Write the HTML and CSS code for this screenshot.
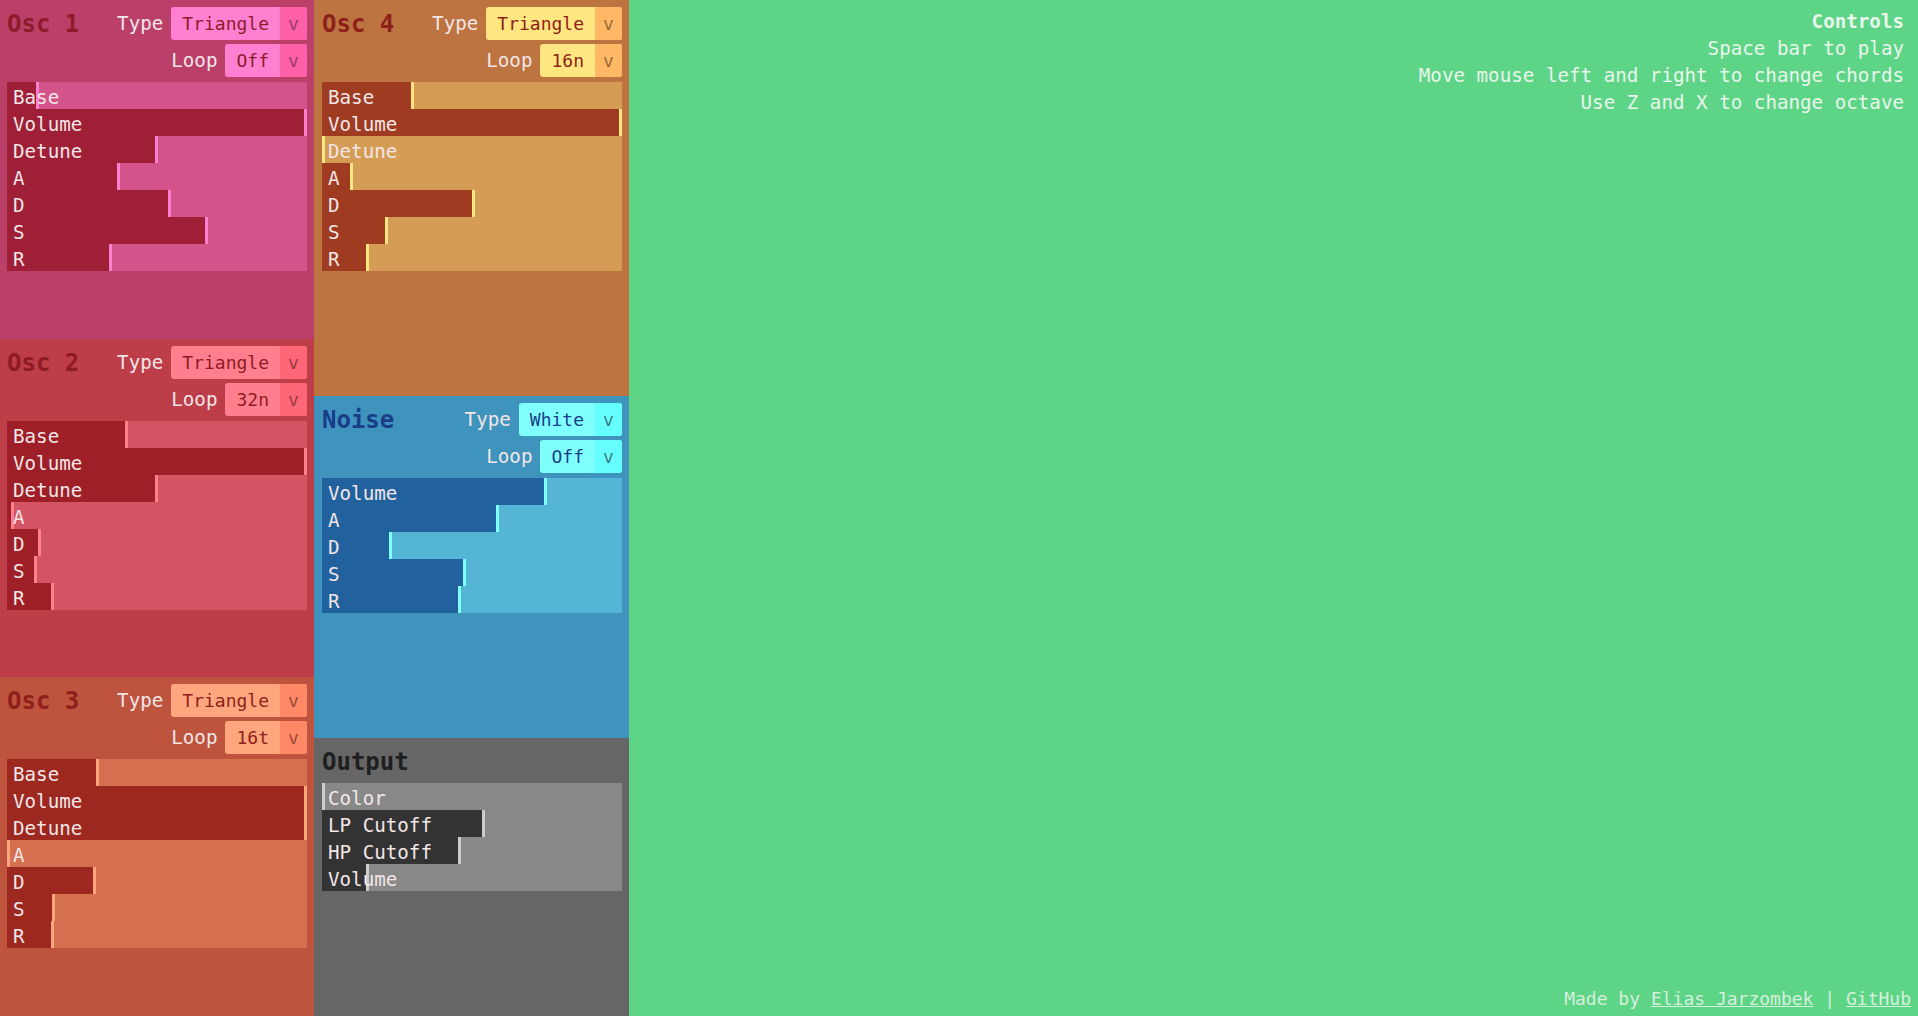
FILE: index.html
```html
<!DOCTYPE html>
<html lang="en">
<head>
<meta charset="utf-8">
<title>Synth</title>
<link rel="stylesheet" href="styles.css">
</head>
<body>
<div class="app">
  <div class="col col-a">
    <section class="panel osc1">
      <div class="head">
        <h2 class="title">Osc 1</h2>
        <div class="opts">
          <div class="opt"><span class="opt-label">Type</span><div class="select"><span class="val">Triangle</span><span class="arr">v</span></div></div>
          <div class="opt"><span class="opt-label">Loop</span><div class="select"><span class="val">Off</span><span class="arr">v</span></div></div>
        </div>
      </div>
      <div class="sliders">
        <div class="sl"><div class="fill" style="width:29px"></div><span class="lbl">Base</span></div>
        <div class="sl"><div class="fill" style="width:297px"></div><span class="lbl">Volume</span></div>
        <div class="sl"><div class="fill" style="width:148px"></div><span class="lbl">Detune</span></div>
        <div class="sl"><div class="fill" style="width:110px"></div><span class="lbl">A</span></div>
        <div class="sl"><div class="fill" style="width:161px"></div><span class="lbl">D</span></div>
        <div class="sl"><div class="fill" style="width:198px"></div><span class="lbl">S</span></div>
        <div class="sl"><div class="fill" style="width:102px"></div><span class="lbl">R</span></div>
      </div>
    </section>
    <section class="panel osc2">
      <div class="head">
        <h2 class="title">Osc 2</h2>
        <div class="opts">
          <div class="opt"><span class="opt-label">Type</span><div class="select"><span class="val">Triangle</span><span class="arr">v</span></div></div>
          <div class="opt"><span class="opt-label">Loop</span><div class="select"><span class="val">32n</span><span class="arr">v</span></div></div>
        </div>
      </div>
      <div class="sliders">
        <div class="sl"><div class="fill" style="width:118px"></div><span class="lbl">Base</span></div>
        <div class="sl"><div class="fill" style="width:297px"></div><span class="lbl">Volume</span></div>
        <div class="sl"><div class="fill" style="width:148px"></div><span class="lbl">Detune</span></div>
        <div class="sl"><div class="fill" style="width:4px"></div><span class="lbl">A</span></div>
        <div class="sl"><div class="fill" style="width:31px"></div><span class="lbl">D</span></div>
        <div class="sl"><div class="fill" style="width:27px"></div><span class="lbl">S</span></div>
        <div class="sl"><div class="fill" style="width:44px"></div><span class="lbl">R</span></div>
      </div>
    </section>
    <section class="panel osc3">
      <div class="head">
        <h2 class="title">Osc 3</h2>
        <div class="opts">
          <div class="opt"><span class="opt-label">Type</span><div class="select"><span class="val">Triangle</span><span class="arr">v</span></div></div>
          <div class="opt"><span class="opt-label">Loop</span><div class="select"><span class="val">16t</span><span class="arr">v</span></div></div>
        </div>
      </div>
      <div class="sliders">
        <div class="sl"><div class="fill" style="width:89px"></div><span class="lbl">Base</span></div>
        <div class="sl"><div class="fill" style="width:297px"></div><span class="lbl">Volume</span></div>
        <div class="sl"><div class="fill" style="width:297px"></div><span class="lbl">Detune</span></div>
        <div class="sl"><div class="fill" style="width:0px"></div><span class="lbl">A</span></div>
        <div class="sl"><div class="fill" style="width:86px"></div><span class="lbl">D</span></div>
        <div class="sl"><div class="fill" style="width:45px"></div><span class="lbl">S</span></div>
        <div class="sl"><div class="fill" style="width:44px"></div><span class="lbl">R</span></div>
      </div>
    </section>
  </div>
  <div class="col col-b">
    <section class="panel osc4">
      <div class="head">
        <h2 class="title">Osc 4</h2>
        <div class="opts">
          <div class="opt"><span class="opt-label">Type</span><div class="select"><span class="val">Triangle</span><span class="arr">v</span></div></div>
          <div class="opt"><span class="opt-label">Loop</span><div class="select"><span class="val">16n</span><span class="arr">v</span></div></div>
        </div>
      </div>
      <div class="sliders">
        <div class="sl"><div class="fill" style="width:89px"></div><span class="lbl">Base</span></div>
        <div class="sl"><div class="fill" style="width:297px"></div><span class="lbl">Volume</span></div>
        <div class="sl"><div class="fill" style="width:0px"></div><span class="lbl">Detune</span></div>
        <div class="sl"><div class="fill" style="width:28px"></div><span class="lbl">A</span></div>
        <div class="sl"><div class="fill" style="width:150px"></div><span class="lbl">D</span></div>
        <div class="sl"><div class="fill" style="width:63px"></div><span class="lbl">S</span></div>
        <div class="sl"><div class="fill" style="width:44px"></div><span class="lbl">R</span></div>
      </div>
    </section>
    <section class="panel noise">
      <div class="head">
        <h2 class="title">Noise</h2>
        <div class="opts">
          <div class="opt"><span class="opt-label">Type</span><div class="select"><span class="val">White</span><span class="arr">v</span></div></div>
          <div class="opt"><span class="opt-label">Loop</span><div class="select"><span class="val">Off</span><span class="arr">v</span></div></div>
        </div>
      </div>
      <div class="sliders">
        <div class="sl"><div class="fill" style="width:222px"></div><span class="lbl">Volume</span></div>
        <div class="sl"><div class="fill" style="width:174px"></div><span class="lbl">A</span></div>
        <div class="sl"><div class="fill" style="width:67px"></div><span class="lbl">D</span></div>
        <div class="sl"><div class="fill" style="width:141px"></div><span class="lbl">S</span></div>
        <div class="sl"><div class="fill" style="width:136px"></div><span class="lbl">R</span></div>
      </div>
    </section>
    <section class="panel output">
      <div class="head">
        <h2 class="title">Output</h2>
      </div>
      <div class="sliders">
        <div class="sl"><div class="fill" style="width:0px"></div><span class="lbl">Color</span></div>
        <div class="sl"><div class="fill" style="width:160px"></div><span class="lbl">LP Cutoff</span></div>
        <div class="sl"><div class="fill" style="width:136px"></div><span class="lbl">HP Cutoff</span></div>
        <div class="sl"><div class="fill" style="width:44px"></div><span class="lbl">Volume</span></div>
      </div>
    </section>
  </div>
  <main class="stage">
    <div class="controls">
      <div class="controls-title">Controls</div>
      <div>Space bar to play</div>
      <div>Move mouse left and right to change chords</div>
      <div>Use Z and X to change octave</div>
    </div>
    <footer class="credits">Made by <a href="#">Elias Jarzombek</a> | <a href="#">GitHub</a></footer>
  </main>
</div>
</body>
</html>
```

FILE: styles.css
```css
* { box-sizing: border-box; }
html, body { margin: 0; padding: 0; }
body {
  font-family: "DejaVu Sans Mono", "Liberation Mono", monospace;
  font-size: 19.2px;
  color: #f2e5e7;
  background: #5ed487;
  overflow: hidden;
}
.app {
  display: flex;
  height: 1016px;
}
.col {
  display: flex;
  flex-direction: column;
  flex: none;
}
.col-a { width: 314px; }
.col-b { width: 315px; }
.panel {
  flex: 1 1 auto;
  padding: 7px;
  display: flex;
  flex-direction: column;
  background: var(--bg);
}
.col-b .panel { padding-left: 8px; }
.head {
  display: flex;
  justify-content: space-between;
  align-items: flex-start;
}
.title {
  margin: 0;
  font-size: 24px;
  font-weight: bold;
  height: 33px;
  line-height: 35px;
  color: var(--title);
}
.opts {
  display: flex;
  flex-direction: column;
  align-items: flex-end;
  gap: 4px;
}
.opt {
  display: flex;
  align-items: center;
  gap: 8px;
  height: 33px;
}
.opt-label { color: #f2e5e7; line-height: 33px; }
.select {
  display: flex;
  height: 33px;
  border-radius: 3px;
  overflow: hidden;
  font-size: 18px;
  line-height: 34px;
  background: var(--sel);
  color: var(--title);
}
.select .val { padding: 0 11px; }
.select .arr {
  width: 27px;
  text-align: center;
  background: var(--arr);
  color: var(--arrtext);
}
.sliders {
  margin-top: 5px;
  display: flex;
  flex-direction: column;
  width: 300px;
}
.sl {
  display: grid;
  height: 27px;
  background: var(--track);
  overflow: hidden;
}
.fill {
  grid-area: 1 / 1;
  height: 27px;
  background: var(--fill);
  border-right: 3px solid var(--thumb);
  box-sizing: content-box;
  justify-self: start;
}
.lbl {
  grid-area: 1 / 1;
  padding-left: 6px;
  line-height: 27px;
  color: #f3e6e8;
  z-index: 1;
  transform: translateY(1.5px);
}

.osc1 { --bg:#bb4069; --title:#8e1b2c; --sel:#ff7fd0; --arr:#ff60a8; --arrtext:#9a3a66; --track:#d3548a; --fill:#9e1f36; --thumb:#ff7fd0; }
.osc2 { --bg:#bd3d48; --title:#8e1b23; --sel:#ff7f8f; --arr:#ff6677; --arrtext:#9a3a44; --track:#d35462; --fill:#9e1f27; --thumb:#ff7f8f; }
.osc3 { --bg:#be533e; --title:#8e1f1b; --sel:#ffa67f; --arr:#ff8866; --arrtext:#9a4a3a; --track:#d4704f; --fill:#9c2820; --thumb:#ffa67f; }
.osc4 { --bg:#bd7441; --title:#8e1f1b; --sel:#ffe680; --arr:#ffb866; --arrtext:#9a6a3a; --track:#d49c54; --fill:#9e3b21; --thumb:#ffe680; }
.noise { --bg:#3f94be; --title:#1a3d8a; --sel:#80ffff; --arr:#66ffff; --arrtext:#3a7f80; --track:#54b5d5; --fill:#21629e; --thumb:#80ffff; }
.output { --bg:#666666; --title:#1f1f1f; --track:#888888; --fill:#333333; --thumb:#cccccc; }

.stage {
  flex: 1 1 auto;
  display: flex;
  flex-direction: column;
  justify-content: space-between;
  align-items: flex-end;
  background: #5ed487;
  padding: 9px 14px 7px 0;
}
.controls {
  text-align: right;
  line-height: 26.9px;
  color: #e9f6ec;
}
.controls-title { font-weight: bold; }
.credits {
  font-size: 18px;
  color: #d6f0dd;
  margin-right: -7px;
}
.credits a { color: inherit; }
```
